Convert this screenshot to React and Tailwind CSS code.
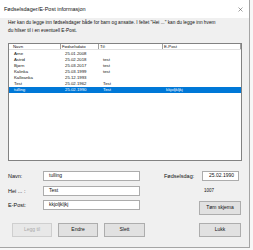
import React from "react";

const rows = [
  ["Arne", "25.01.2008", "", ""],
  ["Astrid", "25.02.2018", "test", ""],
  ["Bjørn", "25.03.2017", "test", ""],
  ["Kalinka", "25.03.1999", "test", ""],
  ["Kalleånka", "25.12.1993", "", ""],
  ["Test", "25.02.1962", "Test", ""],
  ["tulling", "25.02.1990", "Test", "kkjoljkljkj"],
];

function Btn({ children, w, className = "", disabled }) {
  return (
    <div
      className={`h-[14px] ${w} flex items-center justify-center border text-[5px] ${disabled ? "text-[#a8a8a8] border-[#cfcfcf] bg-[#e8e8e8]" : "text-[#111] border-[#adadad] bg-[#e1e1e1]"} ${className}`}
    >
      {children}
    </div>
  );
}

function Input({ w, value, pl = "pl-[5px]" }) {
  return (
    <div className={`h-[10px] ${w} bg-white border border-[#acacac] flex items-center ${pl} text-[5px] text-[#111]`}>
      {value}
    </div>
  );
}

export default function App() {
  return (
    <div className="w-[253px] h-[250px] bg-[#f7f7f7] font-['Liberation_Sans',sans-serif]">
      <div className="w-[250px] h-[248px] bg-[#f0f0f0] border-r border-b border-[#a5a5a5] flex flex-col">
        <div className="h-[18px] bg-white flex items-center justify-between pl-[4px] pr-[6px]">
          <span className="text-[5.5px] text-[#111]">Fødselsdager/E-Post informasjon</span>
          <svg width="5" height="5" viewBox="0 0 10 10">
            <path d="M1 1 L9 9 M9 1 L1 9" stroke="#444" strokeWidth="1" fill="none" />
          </svg>
        </div>
        <div className="px-[8px] flex flex-col">
          <div className="mt-[1px] text-[4.75px] leading-[8px] text-[#111] whitespace-nowrap">
            <div>Her kan du legge inn fødselsdager både for barn og ansatte. I feltet "Hei ..." kan du legge inn hvem</div>
            <div>du hilser til i en eventuell E-Post.</div>
          </div>
          <div className="mt-[8px] w-[234px] h-[118px] border border-[#828282] bg-white flex flex-col text-[4.3px]">
            <div className="flex h-[6px] leading-[6px] border-b border-[#e0e0e0] text-[#111]">
              <div className="w-[52px] pl-[4px] border-r border-[#a0a0a0]">Navn</div>
              <div className="w-[38px] pl-[1px] border-r border-[#a0a0a0]">Fødselsdato</div>
              <div className="w-[64px] pl-[1px] border-r border-[#a0a0a0]">Til:</div>
              <div className="flex-1 pl-[1px] border-r border-[#a0a0a0]">E-Post</div>
            </div>
            <div className="mt-[1px] flex flex-col">
              {rows.map((r, i) => {
                const sel = i === rows.length - 1;
                return (
                  <div
                    key={i}
                    className={`flex h-[6px] leading-[6px] ${sel ? "bg-[#0078d7] text-white" : "text-[#111]"}`}
                  >
                    <div className="w-[52px] pl-[5px]">{r[0]}</div>
                    <div className="w-[38px] pl-[4px]">{r[1]}</div>
                    <div className="w-[64px] pl-[4px]">{r[2]}</div>
                    <div className="flex-1 pl-[3px]">{r[3]}</div>
                  </div>
                );
              })}
            </div>
          </div>
          <div className="mt-[10px] flex items-center text-[5.5px] text-[#111]">
            <div className="w-[35px]">Navn:</div>
            <Input w="w-[97px]" value="tulling" />
            <div className="ml-[24px] w-[38px]">Fødselsdag:</div>
            <Input w="w-[37px]" value="25.02.1990" pl="pl-[6px]" />
          </div>
          <div className="mt-[5px] flex items-center text-[5.5px] text-[#111]">
            <div className="w-[35px]">Hei ... :</div>
            <Input w="w-[97px]" value="Test" />
            <div className="ml-[64px] text-[4.5px]">1007</div>
          </div>
          <div className="mt-[4px] flex items-start text-[5.5px] text-[#111]">
            <div className="w-[35px] h-[10px] flex items-center">E-Post:</div>
            <Input w="w-[97px]" value="kkjoljkljkj" />
            <Btn w="w-[42px]" className="ml-[59px] mt-[1px] h-[13px]">Tøm skjema</Btn>
          </div>
          <div className="mt-[8px] flex">
            <Btn w="w-[40px]" className="ml-[4px]" disabled>Legg til</Btn>
            <Btn w="w-[40px]" className="ml-[6px]">Endre</Btn>
            <Btn w="w-[41px]" className="ml-[6px]">Slett</Btn>
            <Btn w="w-[42px]" className="ml-[54px]">Lukk</Btn>
          </div>
        </div>
      </div>
    </div>
  );
}
